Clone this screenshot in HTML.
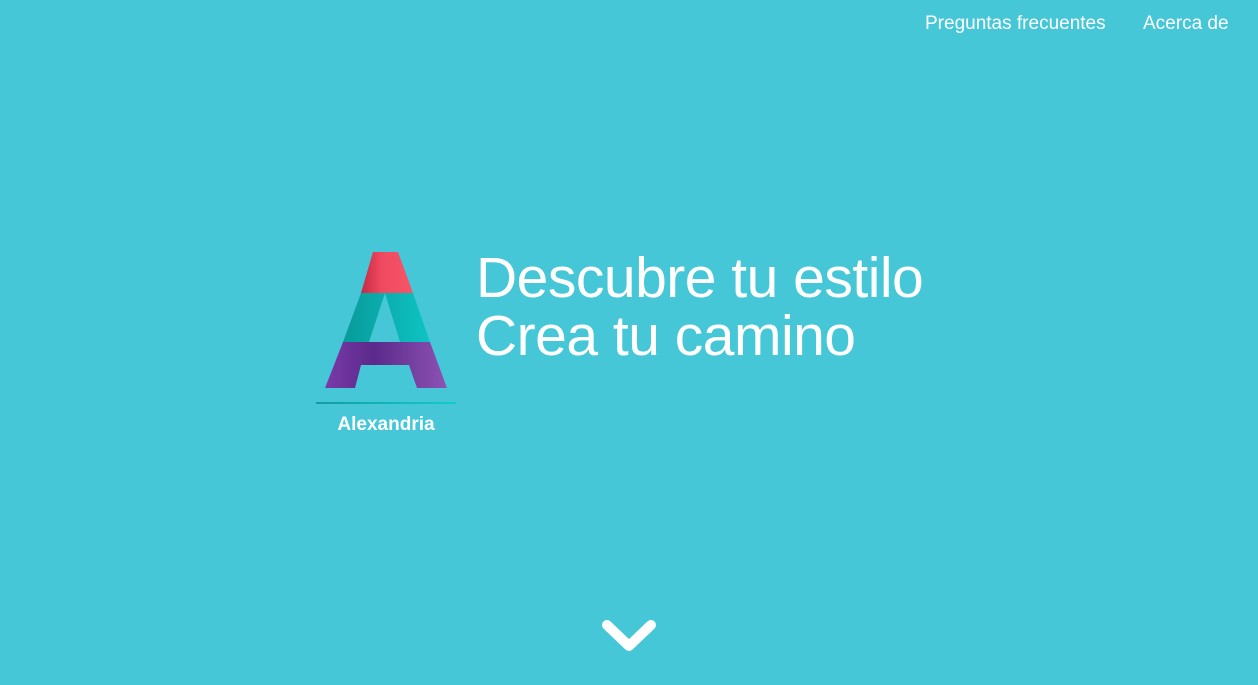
<!DOCTYPE html>
<html><head><meta charset="utf-8"><style>
html,body{margin:0;padding:0;}
body{width:1258px;height:685px;background:#46c7d8;position:relative;overflow:hidden;font-family:"Liberation Sans",Arial,sans-serif;color:#fff;}
.nav{position:absolute;top:13px;font-size:19px;}
.h{position:absolute;left:476px;font-size:57px;line-height:1;white-space:nowrap;letter-spacing:-0.5px;}
</style></head><body>
<div class="nav" style="left:925px">Preguntas frecuentes</div>
<div class="nav" style="left:1143px">Acerca de</div>
<svg style="position:absolute;left:0;top:0" width="1258" height="685">
<defs>
<linearGradient id="r" x1="0" x2="1"><stop offset="0" stop-color="#c42a44"/><stop offset="0.4" stop-color="#f04a60"/><stop offset="1" stop-color="#f75568"/></linearGradient>
<linearGradient id="t" x1="0" x2="1"><stop offset="0" stop-color="#089a9a"/><stop offset="1" stop-color="#0ec4c4"/></linearGradient>
<linearGradient id="p" x1="0" x2="1"><stop offset="0" stop-color="#7a3aa8"/><stop offset="0.4" stop-color="#5b2a8a"/><stop offset="1" stop-color="#8d52b4"/></linearGradient>
<linearGradient id="ln" x1="0" x2="1"><stop offset="0" stop-color="#109ea0"/><stop offset="1" stop-color="#12cccc"/></linearGradient>
</defs>
<path d="M373 252 L398 252 L413 293 L361 293 Z" fill="url(#r)"/>
<path fill-rule="evenodd" d="M361 293 L413 293 L430 342 L343 342 Z M385 293 L369 342 L400 342 Z" fill="url(#t)"/>
<path d="M343 342 L430 342 L447 388 L417 388 L409 365 L361 365 L355 388 L325 388 Z" fill="url(#p)"/>
<rect x="316" y="402" width="140" height="2" fill="url(#ln)"/>
<text x="386" y="430" text-anchor="middle" font-family="Liberation Sans, sans-serif" font-size="19" font-weight="bold" fill="#fff">Alexandria</text>
<path d="M607 625 L629 646 L651 625" fill="none" stroke="#fff" stroke-width="10" stroke-linecap="round" stroke-linejoin="round"/>
</svg>
<div class="h" style="top:250px">Descubre tu estilo</div>
<div class="h" style="top:308px">Crea tu camino</div>
</body></html>
